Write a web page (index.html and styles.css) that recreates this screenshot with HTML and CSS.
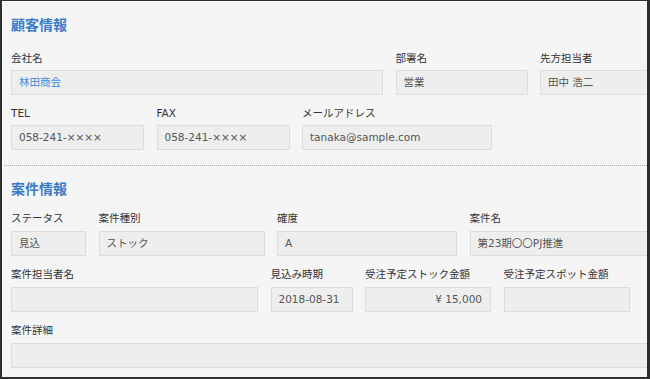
FILE: index.html
```html
<!DOCTYPE html>
<html>
<head>
    <meta charset="utf-8">
    <link rel="stylesheet" href="styles.css">
</head>
<body>
    <div class="frame">
        <div class="section section-customer">
            <div class="section-title">顧客情報</div>
            <div class="row">
                <div class="field w-company">
                    <div class="field-label">会社名</div>
                    <div class="field-value link">林田商会</div>
                </div>
                <div class="field w-dept">
                    <div class="field-label">部署名</div>
                    <div class="field-value">営業</div>
                </div>
                <div class="field w-dept">
                    <div class="field-label">先方担当者</div>
                    <div class="field-value">田中 浩二</div>
                </div>
            </div>
            <div class="row">
                <div class="field w-phone">
                    <div class="field-label">TEL</div>
                    <div class="field-value">058-241-××××</div>
                </div>
                <div class="field w-phone">
                    <div class="field-label">FAX</div>
                    <div class="field-value">058-241-××××</div>
                </div>
                <div class="field w-mail">
                    <div class="field-label">メールアドレス</div>
                    <div class="field-value">tanaka@sample.com</div>
                </div>
            </div>
        </div>

        <div class="section section-deal">
            <div class="section-title">案件情報</div>
            <div class="row">
                <div class="field w-status">
                    <div class="field-label">ステータス</div>
                    <div class="field-value">見込</div>
                </div>
                <div class="field w-type">
                    <div class="field-label">案件種別</div>
                    <div class="field-value">ストック</div>
                </div>
                <div class="field w-rank">
                    <div class="field-label">確度</div>
                    <div class="field-value">A</div>
                </div>
                <div class="field w-name">
                    <div class="field-label">案件名</div>
                    <div class="field-value">第23期〇〇PJ推進</div>
                </div>
            </div>
            <div class="row">
                <div class="field w-owner">
                    <div class="field-label">案件担当者名</div>
                    <div class="field-value"></div>
                </div>
                <div class="field w-date">
                    <div class="field-label">見込み時期</div>
                    <div class="field-value">2018-08-31</div>
                </div>
                <div class="field w-amount">
                    <div class="field-label">受注予定ストック金額</div>
                    <div class="field-value amount">¥ 15,000</div>
                </div>
                <div class="field w-amount">
                    <div class="field-label">受注予定スポット金額</div>
                    <div class="field-value amount"></div>
                </div>
            </div>
            <div class="row">
                <div class="field w-full">
                    <div class="field-label">案件詳細</div>
                    <div class="field-value"></div>
                </div>
            </div>
        </div>
    </div>
</body>
</html>
```

FILE: styles.css
```css
body {
    margin: 0;
    padding: 0;
    font-family: "DejaVu Sans", "Noto Sans CJK JP", sans-serif;
    background-color: #F5F5F5;
}
.frame {
    width: 650px;
    height: 379px;
    box-sizing: border-box;
    border: solid #2E2E2E;
    border-width: 1px 3px 2px 2px;
    background-color: #F5F5F5;
    box-shadow: inset 1px 1px 0 #FFF;
    overflow: hidden;
}
.section {
    padding-left: 9px;
}
.section-customer {
    padding-top: 13px;
    padding-bottom: 4px;
    margin-left: 2px;
    padding-left: 7px;
    border-bottom: 1px dotted #A8A8A8;
}
.section-deal {
    padding-top: 12px;
}
.section-title {
    font-family: "Noto Sans CJK JP", sans-serif;
    font-size: 14px;
    font-weight: bold;
    line-height: 20px;
    color: #3B7CC6;
    margin-bottom: 17px;
}
.section-deal .section-title {
    margin-bottom: 13px;
}
.row {
    display: flex;
    gap: 12.5px;
    margin-bottom: 11px;
}
.field {
    flex: none;
}
.field-label {
    font-size: 10.5px;
    line-height: 14px;
    color: #333;
    margin-bottom: 5px;
    white-space: nowrap;
}
.section-deal .field-label {
    margin-bottom: 6px;
}
.field-value {
    height: 25px;
    box-sizing: border-box;
    padding: 0 7px;
    border: 1px solid #DCDCDC;
    background-color: #EEEEEE;
    font-size: 10.5px;
    line-height: 23px;
    color: #555;
    white-space: nowrap;
    overflow: hidden;
}
.field-value.link {
    color: #3C8DE0;
}
.field-value.amount {
    text-align: right;
    padding-right: 8px;
}
.w-company { width: 372px; }
.w-dept { width: 132px; }
.w-phone { width: 133px; }
.w-mail { width: 190px; }
.w-status { width: 75px; }
.w-type { width: 166px; }
.w-rank { width: 180px; }
.w-name { width: 180px; }
.w-owner { width: 247px; }
.w-date { width: 82px; }
.w-amount { width: 126px; }
.w-full { width: 660px; }
```
